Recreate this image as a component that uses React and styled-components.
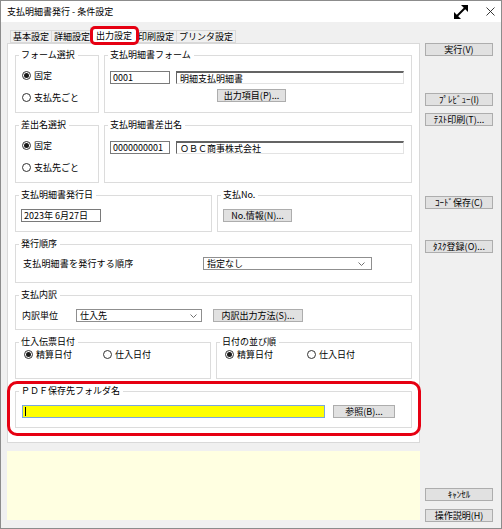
import React from "react";
import styled, { createGlobalStyle } from "styled-components";

const GlobalStyle = createGlobalStyle`
  html, body { margin: 0; padding: 0; background: #fff; }
  body {
    font-family: "Noto Sans CJK JP", "Noto Sans", sans-serif;
    font-size: 9px;
    color: #000;
  }
  * { box-sizing: border-box; }
`;

const Window = styled.div`
  width: 502px;
  height: 529px;
  border: 1px solid #8c8c8c;
  background: #f0f0f0;
  display: flex;
  flex-direction: column;
  overflow: hidden;
`;

const TitleBar = styled.div`
  height: 21px;
  flex-shrink: 0;
  background: #fff;
  display: flex;
  align-items: center;
  padding-left: 6px;
`;

const Title = styled.span`
  flex: 1;
  font-size: 9px;
  line-height: 12px;
`;

const TitleIcons = styled.div`
  display: flex;
  align-items: center;
  gap: 17px;
  padding-right: 6px;
`;

const Body = styled.div`
  flex: 1;
  display: flex;
  min-height: 0;
`;

const LeftCol = styled.div`
  width: 413px;
  margin-left: 6px;
  display: flex;
  flex-direction: column;
`;

const TabStrip = styled.div`
  margin-top: 5px;
  height: 16px;
  display: flex;
  align-items: flex-end;
  padding-left: 3px;
  position: relative;
  z-index: 1;
`;

const Tab = styled.div`
  height: ${(p) => (p.$active ? "17px" : "13px")};
  margin: ${(p) => (p.$active ? "0 -2px -1px -3px" : "0 0 0 -1px")};
  padding: ${(p) => (p.$active ? "0 5px" : "0 2px")};
  background: ${(p) => (p.$active ? "#fff" : "#f0f0f0")};
  border: 1px solid #d9d9d9;
  border-bottom: ${(p) => (p.$active ? "none" : "1px solid #d9d9d9")};
  display: flex;
  align-items: center;
  justify-content: center;
  line-height: 12px;
  white-space: nowrap;
  position: relative;
  z-index: ${(p) => (p.$active ? 2 : 1)};
  &:first-child { margin-left: 0; }
`;

const TabHighlight = styled.span`
  &::after {
    content: "";
    position: absolute;
    top: -2px;
    left: -1px;
    right: -2px;
    bottom: -1px;
    border: 3px solid #e60012;
    border-radius: 5px;
    pointer-events: none;
  }
`;

const Panel = styled.div`
  height: 400px;
  background: #fff;
  border: 1px solid #d9d9d9;
  padding: 11px 7px 0;
  display: flex;
  flex-direction: column;
  gap: 12px;
`;

const Row = styled.div`
  display: flex;
  gap: 5px;
`;

const Group = styled.div`
  width: ${(p) => (p.$w ? `${p.$w}px` : "auto")};
  flex: ${(p) => (p.$w ? "none" : "1")};
  height: ${(p) => p.$h}px;
  border: 1px solid #dcdcdc;
  display: flex;
  flex-direction: column;
  position: relative;
`;

const HighlightGroup = styled(Group)`
  &::after {
    content: "";
    position: absolute;
    top: -11px;
    left: -9px;
    right: -10px;
    bottom: -9px;
    border: 3px solid #e60012;
    border-radius: 10px;
    pointer-events: none;
  }
`;

const Legend = styled.div`
  align-self: flex-start;
  margin: -7px 0 0 3px;
  padding: 0 3px 0 2px;
  background: #fff;
  line-height: 12px;
  font-size: 9px;
  white-space: nowrap;
  color: ${(p) => (p.$dim ? "#333" : "#000")};
`;

const RadioStack = styled.div`
  display: flex;
  flex-direction: column;
  gap: 10px;
  padding-left: 6px;
  margin-top: 8px;
`;

const RadioRow = styled.div`
  display: flex;
  padding-left: 8px;
  margin-top: 0;
`;

const RadioItem = styled.div`
  display: flex;
  align-items: center;
  gap: 3px;
  height: 12px;
  width: ${(p) => (p.$w ? `${p.$w}px` : "auto")};
  white-space: nowrap;
`;

const RadioCircle = styled.span`
  width: 9px;
  height: 9px;
  border-radius: 50%;
  border: 1px solid #333;
  background: #fff;
  display: flex;
  align-items: center;
  justify-content: center;
  flex-shrink: 0;
`;

const RadioDot = styled.span`
  width: 5px;
  height: 5px;
  border-radius: 50%;
  background: #1a1a1a;
`;

const FieldRow = styled.div`
  display: flex;
  align-items: center;
  gap: ${(p) => (p.$gap != null ? p.$gap : 6)}px;
  padding-left: ${(p) => (p.$pl != null ? p.$pl : 5)}px;
  margin-top: ${(p) => p.$mt || 0}px;
`;

const TextBox = styled.div`
  width: ${(p) => p.$w}px;
  height: 13px;
  flex-shrink: 0;
  background: #fff;
  border: 1px solid #7a7a7a;
  padding: 0 2px;
  display: flex;
  align-items: center;
  font-size: 9px;
  line-height: 11px;
  white-space: nowrap;
  overflow: hidden;
`;

const SunkenBox = styled(TextBox)`
  border-top: 2px solid #646464;
  border-left: 1px solid #646464;
  border-right: 1px solid #e3e3e3;
  border-bottom: 1px solid #e3e3e3;
  padding-left: 3px;
`;

const FolderBox = styled(TextBox)`
  background: #ffff00;
  border: 1px solid #7aa7dc;
`;

const Caret = styled.span`
  width: 1px;
  height: 9px;
  background: #000;
`;

const PushButton = styled.div`
  width: ${(p) => p.$w}px;
  height: 13px;
  flex-shrink: 0;
  margin-left: ${(p) => p.$ml || 0}px;
  margin-top: ${(p) => p.$mt || 0}px;
  background: #e1e1e1;
  border: 1px solid #adadad;
  display: flex;
  align-items: center;
  justify-content: center;
  font-size: 9px;
  line-height: 11px;
  white-space: nowrap;
`;

const Select = styled.div`
  width: ${(p) => p.$w}px;
  height: 13px;
  flex-shrink: 0;
  background: #fff;
  border: 1px solid #8f8f8f;
  padding: 0 ${(p) => p.$pr || 5}px 0 3px;
  display: flex;
  align-items: center;
  justify-content: space-between;
  font-size: 9px;
  line-height: 11px;
  white-space: nowrap;
`;

const FieldLabel = styled.span`
  width: ${(p) => p.$w}px;
  flex-shrink: 0;
  line-height: 12px;
  white-space: nowrap;
  letter-spacing: ${(p) => p.$ls || 0}px;
`;

const Memo = styled.div`
  margin-top: 8px;
  height: 69px;
  background: #ffffe1;
`;

const RightCol = styled.div`
  width: 68px;
  margin-left: 5px;
  display: flex;
  flex-direction: column;
  padding-top: 21px;
  padding-bottom: 6px;
`;

const SideButton = styled(PushButton)`
  margin-top: ${(p) => (p.$auto ? "auto" : `${p.$mt || 0}px`)};
`;

const Chevron = () => (
  <svg width="7" height="4" viewBox="0 0 7 4">
    <polyline points="0.5,0.5 3.5,3.5 6.5,0.5" fill="none" stroke="#606060" strokeWidth="0.9" />
  </svg>
);

const ExpandIcon = () => (
  <svg width="16" height="16" viewBox="0 0 16 16">
    <line x1="3.5" y1="12.5" x2="12.5" y2="3.5" stroke="#000" strokeWidth="2" />
    <polygon points="8,1 15,1 15,8" fill="#000" />
    <polygon points="1,8 1,15 8,15" fill="#000" />
  </svg>
);

const CloseIcon = () => (
  <svg width="9" height="9" viewBox="0 0 9 9">
    <line x1="0.5" y1="0.5" x2="8.5" y2="8.5" stroke="#222" strokeWidth="0.9" />
    <line x1="8.5" y1="0.5" x2="0.5" y2="8.5" stroke="#222" strokeWidth="0.9" />
  </svg>
);

const Radio = ({ checked, label, w }) => (
  <RadioItem $w={w}>
    <RadioCircle>{checked && <RadioDot />}</RadioCircle>
    <span>{label}</span>
  </RadioItem>
);

const tabs = ["基本設定", "詳細設定", "出力設定", "印刷設定", "プリンタ設定"];

export default function App() {
  return (
    <>
      <GlobalStyle />
      <Window>
        <TitleBar>
          <Title>支払明細書発行 - 条件設定</Title>
          <TitleIcons>
            <ExpandIcon />
            <CloseIcon />
          </TitleIcons>
        </TitleBar>
        <Body>
          <LeftCol>
            <TabStrip>
              {tabs.map((t) =>
                t === "出力設定" ? (
                  <Tab key={t} $active>
                    {t}
                    <TabHighlight />
                  </Tab>
                ) : (
                  <Tab key={t}>{t}</Tab>
                )
              )}
            </TabStrip>
            <Panel>
              <Row>
                <Group $w={84} $h={58}>
                  <Legend>フォーム選択</Legend>
                  <RadioStack>
                    <Radio checked label="固定" />
                    <Radio label="支払先ごと" />
                  </RadioStack>
                </Group>
                <Group $h={58}>
                  <Legend>支払明細書フォーム</Legend>
                  <FieldRow $mt={10}>
                    <TextBox $w={60}>0001</TextBox>
                    <SunkenBox $w={228}>明細支払明細書</SunkenBox>
                  </FieldRow>
                  <FieldRow $mt={5}>
                    <PushButton $w={69} $ml={107}>出力項目(P)...</PushButton>
                  </FieldRow>
                </Group>
              </Row>

              <Row>
                <Group $w={84} $h={58}>
                  <Legend>差出名選択</Legend>
                  <RadioStack>
                    <Radio checked label="固定" />
                    <Radio label="支払先ごと" />
                  </RadioStack>
                </Group>
                <Group $h={58}>
                  <Legend>支払明細書差出名</Legend>
                  <FieldRow $mt={10}>
                    <TextBox $w={60}>0000000001</TextBox>
                    <SunkenBox $w={228}>ＯＢＣ商事株式会社</SunkenBox>
                  </FieldRow>
                </Group>
              </Row>

              <Row>
                <Group $w={197} $h={37}>
                  <Legend>支払明細書発行日</Legend>
                  <FieldRow $mt={8} $pl={5}>
                    <TextBox $w={80}>2023年 6月27日</TextBox>
                  </FieldRow>
                </Group>
                <Group $h={37}>
                  <Legend>支払No.</Legend>
                  <FieldRow $mt={8} $pl={5}>
                    <PushButton $w={69}>No.情報(N)...</PushButton>
                  </FieldRow>
                </Group>
              </Row>

              <Row>
                <Group $h={39}>
                  <Legend>発行順序</Legend>
                  <FieldRow $mt={7} $pl={7} $gap={0}>
                    <FieldLabel $w={180} $ls={0.2}>支払明細書を発行する順序</FieldLabel>
                    <Select $w={169} $pr={6}>
                      <span>指定なし</span>
                      <Chevron />
                    </Select>
                  </FieldRow>
                </Group>
              </Row>

              <Row>
                <Group $h={35}>
                  <Legend>支払内訳</Legend>
                  <FieldRow $mt={8} $pl={6} $gap={0}>
                    <FieldLabel $w={54}>内訳単位</FieldLabel>
                    <Select $w={126} $pr={4}>
                      <span>仕入先</span>
                      <Chevron />
                    </Select>
                    <PushButton $w={90} $ml={11}>内訳出力方法(S)...</PushButton>
                  </FieldRow>
                </Group>
              </Row>

              <Row>
                <Group $w={196} $h={37}>
                  <Legend>仕入伝票日付</Legend>
                  <RadioRow>
                    <Radio checked label="精算日付" w={79} />
                    <Radio label="仕入日付" />
                  </RadioRow>
                </Group>
                <Group $h={37}>
                  <Legend>日付の並び順</Legend>
                  <RadioRow>
                    <Radio checked label="精算日付" w={82} />
                    <Radio label="仕入日付" />
                  </RadioRow>
                </Group>
              </Row>

              <Row>
                <HighlightGroup $h={37}>
                  <Legend>ＰＤＦ保存先フォルダ名</Legend>
                  <FieldRow $mt={8} $pl={6} $gap={8}>
                    <FolderBox $w={303}>
                      <Caret />
                    </FolderBox>
                    <PushButton $w={62}>参照(B)...</PushButton>
                  </FieldRow>
                </HighlightGroup>
              </Row>
            </Panel>
            <Memo />
          </LeftCol>
          <RightCol>
            <SideButton $w={68}>実行(V)</SideButton>
            <SideButton $w={68} $mt={37}>ﾌﾟﾚﾋﾞｭｰ(I)</SideButton>
            <SideButton $w={68} $mt={7}>ﾃｽﾄ印刷(T)...</SideButton>
            <SideButton $w={68} $mt={70}>ｺｰﾄﾞ保存(C)</SideButton>
            <SideButton $w={68} $mt={31}>ﾀｽｸ登録(O)...</SideButton>
            <SideButton $w={68} $auto>ｷｬﾝｾﾙ</SideButton>
            <SideButton $w={68} $mt={8}>操作説明(H)</SideButton>
          </RightCol>
        </Body>
      </Window>
    </>
  );
}
